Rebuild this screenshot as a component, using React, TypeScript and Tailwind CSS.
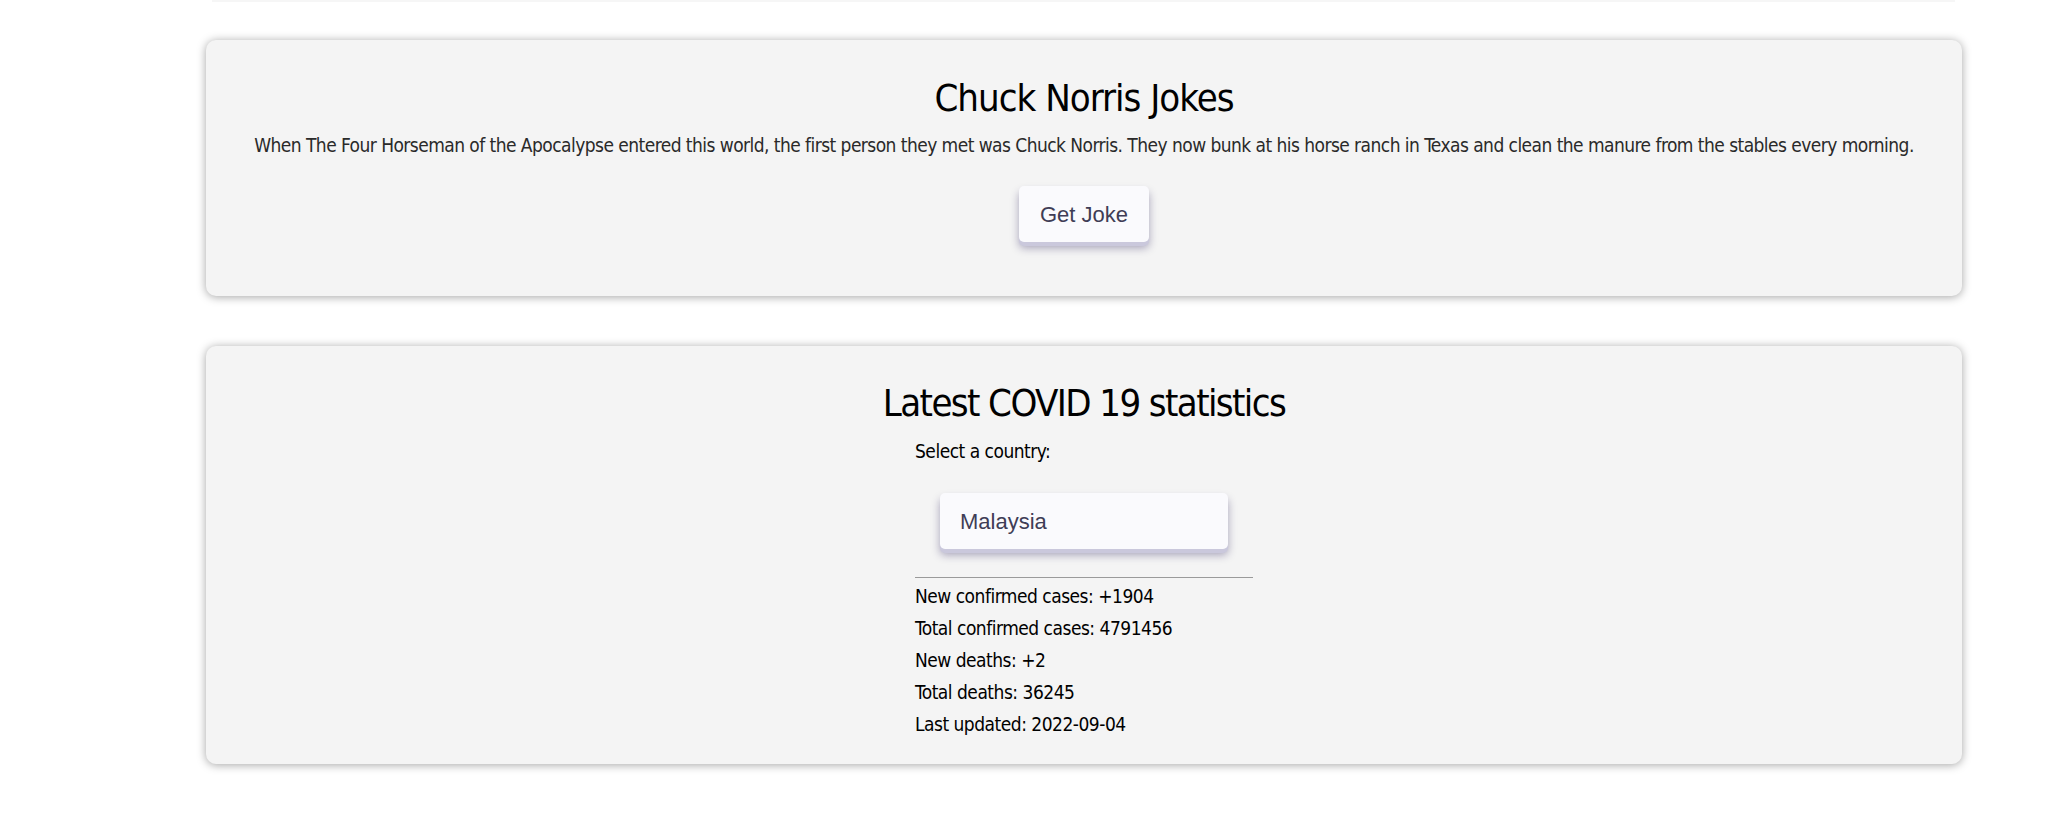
import React, { useState } from 'react';

const stats = [
  { label: 'New confirmed cases', value: '+1904' },
  { label: 'Total confirmed cases', value: '4791456' },
  { label: 'New deaths', value: '+2' },
  { label: 'Total deaths', value: '36245' },
  { label: 'Last updated', value: '2022-09-04' },
];

const joke =
  'When The Four Horseman of the Apocalypse entered this world, the first person they met was Chuck Norris. They now bunk at his horse ranch in Texas and clean the manure from the stables every morning.';

export default function App() {
  const [country, setCountry] = useState('Malaysia');

  return (
    <div className="min-h-screen bg-white font-['Liberation_Sans_Narrow','DejaVu_Sans_Condensed',sans-serif]">
      {/* tail of the previous card, scrolled off */}
      <div className="h-[2px] ml-[212px] w-[1743px] bg-[#f6f6f6]" />

      <div className="ml-[206px] w-[1756px] flex flex-col gap-[50px] mt-[38px]">
        <section className="bg-[#f4f4f4] rounded-[10px] shadow-[0_1px_10px_rgba(0,0,0,0.36)] pt-[34px] pb-[54px] flex flex-col items-center">
          <h1 className="text-[38px] leading-[48px] tracking-[-1px] text-black">Chuck Norris Jokes</h1>
          <p className="mt-[9px] text-[19px] leading-[28px] tracking-[-0.55px] text-[#2a2a2a] whitespace-nowrap">{joke}</p>
          <button className="mt-[27px] h-[56px] px-[21px] rounded-[5px] bg-[#fafafd] text-[#3f3d56] text-[22px] font-['Liberation_Sans',Arial,sans-serif] shadow-[0_4px_0_#cac8dc,0_6px_9px_rgba(40,30,90,0.38)]">
            Get Joke
          </button>
        </section>

        <section className="bg-[#f4f4f4] rounded-[10px] shadow-[0_1px_10px_rgba(0,0,0,0.36)] pt-[33px] pb-[24px] flex flex-col items-center">
          <h1 className="text-[38px] leading-[48px] tracking-[-1.6px] text-black">Latest COVID 19 statistics</h1>
          <div className="w-[338px] flex flex-col mt-[10px]">
            <label className="text-[19px] leading-[28px] tracking-[-0.5px] text-black">Select a country:</label>
            <div className="mt-[28px] mx-auto w-[288px] h-[56px] rounded-[5px] bg-[#fafafd] shadow-[0_4px_0_#cac8dc,0_6px_9px_rgba(40,30,90,0.38)] flex items-center pl-[20px]">
              <span
                className="text-[22px] text-[#3f3d56] font-['Liberation_Sans',Arial,sans-serif]"
                onClick={() => setCountry(country)}
              >
                {country}
              </span>
            </div>
            <div className="mt-[28px] h-px bg-[#9a9a9a]" />
            <div className="mt-[2px] flex flex-col">
              {stats.map(s => (
                <div key={s.label} className="text-[19px] leading-[32px] tracking-[-0.5px] text-black">
                  {s.label}: {s.value}
                </div>
              ))}
            </div>
          </div>
        </section>
      </div>
    </div>
  );
}
